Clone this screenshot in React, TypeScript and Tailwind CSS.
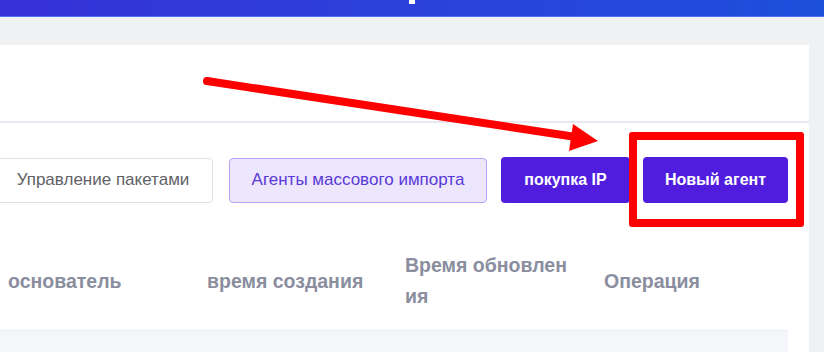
export default function App() {
  const columns = ['основатель', 'время создания', 'Время обновления', 'Операция'];

  return (
    <div className="relative w-[824px] h-[352px] overflow-hidden bg-[#f0f1f3]" style={{ fontFamily: '"Liberation Sans", Arial, sans-serif' }}>
      {/* top bar */}
      <div className="h-[17px] flex justify-center bg-gradient-to-r from-[#3530d8] to-[#1c4fdb] border-b border-[#4f6ef0]">
        <div className="w-[6px] h-[4px] bg-white"></div>
      </div>

      <div className="h-[28px]"></div>

      <div className="flex">
        <div className="w-[809px] h-[307px] bg-white overflow-hidden">
          <div className="h-[76px]"></div>
          <div className="h-[2px] bg-[#e8e8f2]"></div>

          {/* actions */}
          <div className="flex justify-end items-center pt-[34px] pr-[21px]">
            <button className="shrink-0 w-[220px] h-[45px] border border-[#dcdfe6] rounded bg-white text-[17px] text-[#606266]">
              Управление пакетами
            </button>
            <button className="shrink-0 ml-[16px] w-[258px] h-[45px] border border-[#b7a0f4] rounded bg-[#ede7fd] text-[17px] text-[#5a38d8]">
              Агенты массового импорта
            </button>
            <button className="shrink-0 ml-[14px] w-[129px] h-[46px] rounded bg-[#501ddf] text-[16px] font-bold text-white">
              покупка IP
            </button>
            <div className="relative shrink-0 ml-[13px]">
              <button className="w-[145px] h-[46px] rounded bg-[#501ddf] text-[16px] font-bold text-white">
                Новый агент
              </button>
              <div className="absolute left-[-14px] right-[-16px] top-[-25px] bottom-[-24px] border-[8px] border-[#ff0000] rounded-[3px]"></div>
            </div>
          </div>

          {/* table */}
          <div className="mt-[29px] w-[788px]">
            <div className="grid grid-cols-[199px_198px_199px_1fr] items-center pl-2 py-[18px] border-b border-[#ebeef5]">
              {columns.map((c) => (
                <div key={c} className="pr-[29px] text-[19.5px] leading-[31px] font-bold text-[#8a8e9e] break-all">
                  {c}
                </div>
              ))}
            </div>
            <div className="h-[40px] bg-[#f5f6fa]"></div>
          </div>
        </div>
      </div>

      {/* annotation arrow */}
      <svg className="absolute left-0 top-0 pointer-events-none" width="824" height="352">
        <line x1="207" y1="81" x2="576" y2="137" stroke="#ff0000" strokeWidth="8" strokeLinecap="round" />
        <polygon points="598,141 573,124 569,151" fill="#ff0000" />
      </svg>
    </div>
  );
}
